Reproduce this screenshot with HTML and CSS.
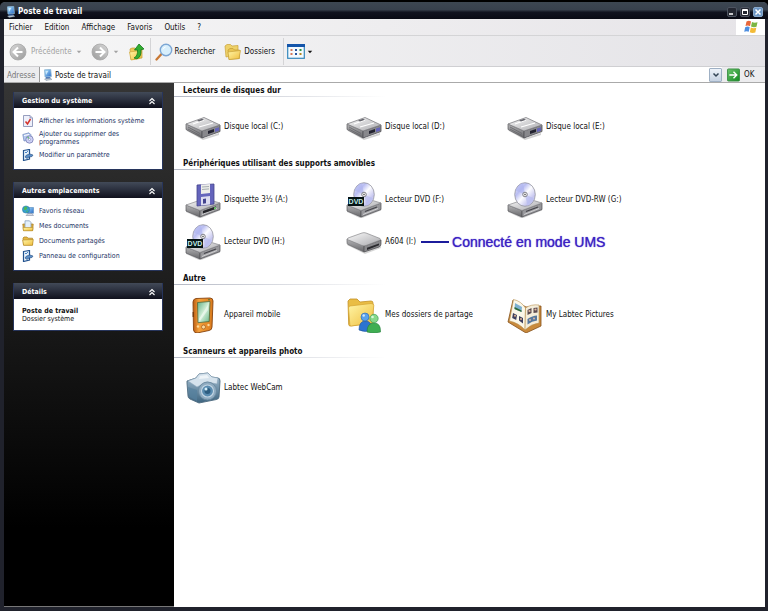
FILE: index.html
```html
<!DOCTYPE html>
<html lang="fr">
<head>
<meta charset="utf-8">
<title>Poste de travail</title>
<link rel="stylesheet" href="styles.css">
</head>
<body>
<svg class="defs" aria-hidden="true">
  <defs>
    <linearGradient id="metal" x1="0" y1="0" x2="1" y2="1"><stop offset="0" stop-color="#fafafa"/><stop offset="1" stop-color="#a9a9ad"/></linearGradient>
    <linearGradient id="side" x1="0" y1="0" x2="0" y2="1"><stop offset="0" stop-color="#b4b4b6"/><stop offset="1" stop-color="#66666a"/></linearGradient>
    <linearGradient id="disc" x1="0" y1="0" x2="1" y2="1"><stop offset="0" stop-color="#f4f4fc"/><stop offset=".3" stop-color="#b9bdf2"/><stop offset=".5" stop-color="#fdfdff"/><stop offset=".75" stop-color="#c6c6f0"/><stop offset="1" stop-color="#eeeef8"/></linearGradient>
    <linearGradient id="gold" x1="0" y1="0" x2="1" y2="1"><stop offset="0" stop-color="#fff6a8"/><stop offset="1" stop-color="#efbd3c"/></linearGradient>
    <linearGradient id="blue" x1="0" y1="0" x2="1" y2="1"><stop offset="0" stop-color="#a8e0fa"/><stop offset="1" stop-color="#2668c8"/></linearGradient>
    <linearGradient id="steel" x1="0" y1="0" x2="0" y2="1"><stop offset="0" stop-color="#a9c3d6"/><stop offset="1" stop-color="#3d647f"/></linearGradient>
    <linearGradient id="orange" x1="0" y1="0" x2="1" y2="0"><stop offset="0" stop-color="#b85a10"/><stop offset=".3" stop-color="#f6a23c"/><stop offset="1" stop-color="#d97a1c"/></linearGradient>
    <linearGradient id="screen" x1="0" y1="0" x2="1" y2="1"><stop offset="0" stop-color="#5fae86"/><stop offset=".5" stop-color="#d5f0d8"/><stop offset="1" stop-color="#67b48a"/></linearGradient>
    <linearGradient id="green" x1="0" y1="0" x2="1" y2="1"><stop offset="0" stop-color="#6cc46c"/><stop offset="1" stop-color="#128a20"/></linearGradient>
    <linearGradient id="grey" x1="0" y1="0" x2="1" y2="1"><stop offset="0" stop-color="#d8d8d8"/><stop offset="1" stop-color="#9a9a9a"/></linearGradient>

    <symbol id="base" viewBox="0 0 36 36">
      <path d="M1 25v5l14 6.500 20-8v-6z" fill="#77777b" opacity=".35"/>
      <path d="M1 23l14 5.500V35L1 29z" fill="url(#side)" stroke="#5c5c60" stroke-width=".7"/>
      <path d="M15 28.500L35 21v6.500L15 35z" fill="#97979b" stroke="#4e4e52" stroke-width=".7"/>
      <path d="M1 23l19-6.500L35 21l-20 7.500z" fill="url(#metal)" stroke="#88888c" stroke-width=".7"/>
      <path d="M19 29.500l12-4.500" stroke="#44444a" stroke-width="1.300"/><path d="M17 32.500l15-6" stroke="#dedee0" stroke-width=".8"/>
    </symbol>
    <symbol id="cd" viewBox="0 0 36 36">
      <ellipse cx="18" cy="12.500" rx="10.300" ry="11.800" fill="url(#disc)" stroke="#94949e" stroke-width=".8"/>
      <path d="M18 12.500L8.500 8.500Q11 2 16 1z" fill="#aeb4ee" opacity=".65"/>
      <path d="M18 12.500l9.500 4q-3 6-7 7.500z" fill="#b6baf0" opacity=".65"/>
      <circle cx="18" cy="12.500" r="2.300" fill="#eee" stroke="#77777f" stroke-width=".9"/><circle cx="18" cy="12.500" r=".8" fill="#555"/>
    </symbol>
    <symbol id="hdd" viewBox="0 0 36 36">
      <path d="M2 20l17 9 15-5v2L18 31 2 22z" fill="#666" opacity=".3"/>
      <path d="M1 15l16 7v7L1 20.500z" fill="url(#side)" stroke="#5c5c60" stroke-width=".7"/>
      <path d="M3 18l12 6.500M3 20l12 6.500" stroke="#66666a" stroke-width=".8"/>
      <path d="M17 22l18-6v6.500L17 29z" fill="#88888c" stroke="#4e4e54" stroke-width=".8"/>
      <path d="M23 22l6-2v3l-6 2z" fill="#222230"/><path d="M30 19.500l4-1.300v3.500l-4 1.300z" fill="#6464b8"/>
      <path d="M1 15l18-6.500L35 16l-18 6z" fill="url(#metal)" stroke="#808084" stroke-width=".8"/>
      <path d="M8 15l11-4M14 18l14-4" stroke="#fff" stroke-width="1.200"/><path d="M12 11.500l5-1.800 2 1-5 1.800z" fill="#66666e"/>
    </symbol>
    <symbol id="removable" viewBox="0 0 36 36">
      <path d="M1 17v4l18 9 16-6v-4z" fill="#888" opacity=".35"/>
      <path d="M1 15l17 7v6L2 20.500Q1 20 1 18z" fill="url(#side)" stroke="#6b6b6e" stroke-width=".7"/>
      <path d="M18 22l17-6v4q0 2-2 3l-15 5z" fill="#88888b" stroke="#4b4b4e" stroke-width=".7"/>
      <path d="M21 23.800L33 19.500v1.800L21 26z" fill="#2a2a2e"/>
      <path d="M2 14l14-5q2-.7 4 0l14 5.500q1.500 1-.5 1.800L20 21.500q-2 .7-4 0L2.500 16q-2-1-.5-2z" fill="url(#metal)" stroke="#88888b" stroke-width=".7"/>
    </symbol>
    <symbol id="floppy" viewBox="0 0 36 36">
      <use href="#base"/>
      <path d="M12 3l17-1v20l-17 2z" fill="#6464bc" stroke="#44448c" stroke-width=".8"/>
      <path d="M16 2.500l9-.5v9l-9 1z" fill="#ececea"/><path d="M17 5l7-.5M17 7.500l7-.6" stroke="#a6aeb0" stroke-width="1"/>
      <path d="M16 15l9-1v8.500l-9 1z" fill="#dcdcf0"/><path d="M18 17l3-.4v4.700l-3 .4z" fill="#44448e"/>
      <path d="M18 29l13-4.500V27L18 31.500z" fill="#25252a"/><path d="M29 25.500l2-.7v2l-2 .7z" fill="#6aca6a"/>
    </symbol>
    <symbol id="dvdrw" viewBox="0 0 36 36"><use href="#base"/><use href="#cd"/></symbol>
    <symbol id="dvd" viewBox="0 0 36 36">
      <use href="#base"/><use href="#cd"/>
      <rect x="2" y="15" width="16" height="9" fill="#061415"/>
      <text class="dvd-label" x="10" y="22" text-anchor="middle" fill="#c2ecea">DVD</text>
    </symbol>
    <symbol id="pda" viewBox="0 0 36 36">
      <path d="M8 5Q8 2 11 1.500L25 1q3 0 3 3l-1 26q0 3-3 3.500L12 36q-3 0-3.500-3z" fill="url(#orange)" stroke="#87430e" stroke-width=".9"/>
      <path d="M12.500 5.500L25 4.500l-.8 20-11.200 1.200z" fill="url(#screen)" stroke="#51683a" stroke-width=".8"/>
      <path d="M14 22l9-14v5l-8 11z" fill="#fff" opacity=".5"/>
      <circle cx="13" cy="29.500" r="1.200" fill="#fcd99a"/><circle cx="18.500" cy="30" r="2" fill="#fcd99a" stroke="#8f4a14" stroke-width=".6"/><circle cx="23.500" cy="28" r="1.200" fill="#fcd99a"/>
      <circle cx="24" cy="2.700" r=".8" fill="#3c7038"/><path d="M8.200 15v5" stroke="#6b3308" stroke-width="1.200"/>
    </symbol>
    <symbol id="share" viewBox="0 0 36 36">
      <path d="M2 4l2-2h7l3 3 11-1q2 0 2 2v20L4 29q-1 0-1.300-1.500z" fill="#e9bd45" stroke="#c39124" stroke-width=".8"/>
      <path d="M4 9l21-2.500q3 0 2.800 2L26 26 5.500 29q-1.500 0-1.700-1.500L2.500 11q0-1.700 1.500-2z" fill="url(#gold)" stroke="#d4a331" stroke-width=".7"/>
      <path d="M13 33q0-9 6.500-9t6 9q-6 3-12.500 0z" fill="#2c74d0" stroke="#1c4f9c" stroke-width=".6"/><circle cx="19" cy="20" r="4" fill="#5aa2ec" stroke="#2462b2" stroke-width=".6"/>
      <path d="M21 35q0-9 7-9t6.500 9q-7 2-13.500 0z" fill="#3fae52" stroke="#23803a" stroke-width=".6"/><circle cx="28" cy="21.500" r="4.200" fill="#86d88a" stroke="#319648" stroke-width=".6"/>
      <circle cx="26.500" cy="20" r="1.300" fill="#d8f8d8"/><circle cx="17.700" cy="18.500" r="1.200" fill="#cfe6fc"/>
    </symbol>
    <symbol id="album" viewBox="0 0 36 36">
      <path d="M1 25L6 3l13 7 15-1v20l-15 7z" fill="#c98a3c" stroke="#85501a" stroke-width=".8"/>
      <path d="M2.500 24L6.500 2.500Q14 4 18.500 11L18 33Q12 26 2.500 24z" fill="#fbf7e8" stroke="#b79150" stroke-width=".6"/>
      <path d="M18.500 11Q24 7 32 8v18q-8 1-14 7z" fill="#f4edda" stroke="#b79150" stroke-width=".6"/>
      <path d="M8 6l7 4-.5 5-7-3z" fill="#7cb0d0"/><path d="M7.600 10l7 3.500-.1 1.500-7-3z" fill="#2e6a38"/>
      <path d="M6 16l4 2-.8 5-4-2zM12 19l4 2v5.500l-4-3z" fill="#3f405e"/><circle cx="8" cy="18.700" r="1" fill="#deb494"/><circle cx="14" cy="22" r="1" fill="#deb494"/>
      <path d="M20.500 13l4-2v5l-4 2zM26.500 11l4-.5v5l-4 .5z" fill="#5b4b50"/><circle cx="22.500" cy="14" r="1.100" fill="#e0b8a0"/><circle cx="28.500" cy="12.500" r="1.100" fill="#e0b8a0"/>
      <path d="M20.500 22q5-3.500 9.500-3.500v5q-5 .5-9.500 4z" fill="#56789e"/><circle cx="23" cy="23" r="1" fill="#e0b8a0"/><circle cx="27" cy="21.500" r="1" fill="#e0b8a0"/>
    </symbol>
    <symbol id="camera" viewBox="0 0 36 36">
      <path d="M2 11l9-3 3-4 9-1 4 4 6 1q2 0 2 3l-1 16q0 2-3 2.600L14 33 5 29q-2-1-2-3L2 13z" fill="url(#steel)" stroke="#4e6b80" stroke-width=".9"/>
      <path d="M3 11l8-3 3-4 9-1 4 4 6 1-1 6-10-2-10 5z" fill="#d5e2ec" stroke="#8ba5b8" stroke-width=".6"/>
      <path d="M15 6l7-1 2 3-10 1z" fill="#eef4f8"/><path d="M3 17l9 3v11l-7-4z" fill="#56809e" opacity=".7"/>
      <circle cx="22.500" cy="21" r="9" fill="#8fabc0" stroke="#6a889e" stroke-width=".9"/>
      <circle cx="22.500" cy="21" r="6" fill="#5a8cb0" stroke="#c4d6e4" stroke-width="1.100"/><circle cx="22.500" cy="21" r="3" fill="#2d5d80"/><circle cx="21" cy="19" r="1.500" fill="#d5effa"/>
    </symbol>

    <symbol id="computer" viewBox="0 0 12 12">
      <path d="M2.500.8l6.200-.4.700 7.200-6.400.5z" fill="url(#blue)" stroke="#8db6d4" stroke-width=".8"/>
      <path d="M4 8.200h4l1 1.500H3.500z" fill="#2459a8"/><path d="M2.500 10l6-.8 1.500 1.300-6 1z" fill="#c4cfd8" stroke="#6b7f92" stroke-width=".4"/>
      <path d="M3.500 2l3-.3L4 6z" fill="#e0f5ff" opacity=".8"/>
    </symbol>
    <symbol id="sheet" viewBox="0 0 12 12"><path d="M1.500.5H8l2.500 2.500v8.500h-9z" fill="#eef0fa" stroke="#7f88ae" stroke-width=".8"/><path d="M8 .5V3h2.500" fill="#c3cae4" stroke="#7f88ae" stroke-width=".6"/><path d="M3.500 6.500l2 2.500 3-5" fill="none" stroke="#d4322a" stroke-width="1.500"/></symbol>
    <symbol id="programs" viewBox="0 0 12 12"><path d="M.8 2.500L7 .8l2 2v5L2 9z" fill="#b5c9ee" stroke="#6d86bc" stroke-width=".7"/><path d="M2 3.500l5-1" stroke="#fff"/><circle cx="7.500" cy="7.500" r="3.700" fill="#ccd0f4" stroke="#7a7fb4" stroke-width=".8"/><path d="M7.500 7.500L4.800 5.500l2-1.300z" fill="#70b884"/><circle cx="7.500" cy="7.500" r="1" fill="#fff" stroke="#777fb0" stroke-width=".5"/></symbol>
    <symbol id="panel" viewBox="0 0 12 12"><path d="M1.500 1.500l6-1v9.500l-6 1.500z" fill="#e8f3fc" stroke="#22528e" stroke-width="1.200"/><path d="M3 8l1.500-2L8 5l3 1-1 1.500-3 .5-2 1.500z" fill="#5d90c8" stroke="#244c80" stroke-width=".6"/><path d="M3 3l1 1 2-2" fill="none" stroke="#4b85c8"/></symbol>
    <symbol id="network" viewBox="0 0 12 12"><path d="M5 2.500h6.500v5.700H5z" fill="url(#blue)" stroke="#6294c4" stroke-width=".7"/><circle cx="4" cy="4.500" r="3.600" fill="#36a0cc" stroke="#23709c" stroke-width=".5"/><path d="M2 2.500l2-1.300L5.500 3 4 5 2 5zM4 6l2-.5-1 2z" fill="#4bb858"/><path d="M4 10.500l2-2h4l1.500 2z" fill="#d6dae4" stroke="#737e96" stroke-width=".5"/></symbol>
    <symbol id="docs" viewBox="0 0 12 12"><path d="M.8 4h10.400l-.5 6.500H1.500z" fill="#dfaf40" stroke="#a97e20" stroke-width=".7"/><path d="M3 .8h4.500L9 2.500v6H3z" fill="#e4f0fa" stroke="#7c98b4" stroke-width=".7"/><path d="M1 7.500h10l-.5 3.300h-9z" fill="url(#gold)" stroke="#b78c28" stroke-width=".6"/></symbol>
    <symbol id="folder" viewBox="0 0 12 12"><path d="M1 3l1-1h3l1 1.200h4.500V10H1.500z" fill="#e6b842" stroke="#a97e20" stroke-width=".7"/><path d="M.7 5L11.300 4.500l-.8 5.800H1.600z" fill="url(#gold)" stroke="#b78c28" stroke-width=".7"/></symbol>

    <symbol id="back" viewBox="0 0 18 18"><circle cx="9" cy="9" r="8" fill="url(#grey)" stroke="#a6a6a6" stroke-width=".8"/><path d="M9 4.500L4.500 9 9 13.500M5 9h8.500" fill="none" stroke="#fff" stroke-width="2"/></symbol>
    <symbol id="up" viewBox="0 0 18 18"><path d="M2 6l2-1h3l1 1h6v9l-11 1.500z" fill="#edc95a" stroke="#c49b30" stroke-width=".7"/><path d="M1.500 9l11-1.500-1 8L3 17z" fill="url(#gold)" stroke="#cfa63a" stroke-width=".7"/><path d="M6 15q4-2 3.500-8H6.500L11 1l5 5-3 .8q.5 7-4 9z" fill="#32ae32" stroke="#177a1c" stroke-width=".8"/></symbol>
    <symbol id="search" viewBox="0 0 18 18"><path d="M1.500 16.500l5-5.500" stroke="#c97834" stroke-width="2.300" stroke-linecap="round"/><circle cx="11" cy="7" r="5.700" fill="#d8effc" stroke="#7ca6d4" stroke-width="1.400"/><path d="M7.500 7Q8 3.500 11.500 3.500q-3 2-4 3.500z" fill="#fff"/></symbol>
    <symbol id="folders" viewBox="0 0 18 18"><path d="M1 3l2-1.500h3.500L8 3l6-.5v9L2 14z" fill="#eed169" stroke="#c8a239" stroke-width=".7"/><path d="M4 7l2-1.500h3L10.500 7h5v8.500L5 16.500z" fill="#e9c452" stroke="#c39c32" stroke-width=".7"/><path d="M4 9l12.500-1.500-1.500 8-10 1z" fill="url(#gold)" stroke="#c8a239" stroke-width=".7"/></symbol>
    <symbol id="views" viewBox="0 0 18 15"><rect x=".7" y=".7" width="16.600" height="13.600" fill="#f4fafe" stroke="#3387bc" stroke-width="1.200"/><path d="M0 0h18v3H0z" fill="#1455aa"/><path d="M3.500 5h2v2h-2zM3.500 9h2v2h-2z" fill="#d4785a"/><path d="M8 5h2v2H8zM8 9h2v2H8z" fill="#27539c"/><path d="M12.500 5h2v2h-2z" fill="#299440"/><path d="M12.500 9h2v2h-2z" fill="#b28622"/></symbol>
    <symbol id="flag" viewBox="0 0 16 14"><path d="M3.500 1.500q2.500-1.300 4.500 0L7 6.200Q5 5 2.500 6z" fill="#e8673a"/><path d="M9 2q2.500 1.200 5.500.2l-1 4.600q-2.800 1-5.500-.3z" fill="#7bb644"/><path d="M2.200 7.200q2.500-1.200 4.500 0l-1 4.600q-2-1.200-4.500 0z" fill="#4d8ee0"/><path d="M7.800 7.600q2.700 1.200 5.500.2l-1 4.700q-3 1-5.500-.3z" fill="#f3bb37"/></symbol>
    <symbol id="go" viewBox="0 0 14 14"><rect x=".5" y=".5" width="13" height="13" rx="1" fill="url(#green)" stroke="#3b8f46"/><path d="M2.500 7h8M7 3.500L10.500 7 7 10.500" fill="none" stroke="#fff" stroke-width="1.500"/></symbol>
    <symbol id="chevrons" viewBox="0 0 8 8"><path d="M1.500 4L4 1.500 6.500 4M1.500 7L4 4.500 6.500 7" fill="none" stroke="#fff" stroke-width="1.100"/></symbol>
    <symbol id="arrow" viewBox="0 0 6 6"><path d="M.8 1.800h4.400L3 4.200z" fill="currentColor"/></symbol>
  </defs>
</svg>

<div class="window">
  <header class="titlebar">
    <svg class="i12"><use href="#computer"/></svg>
    <h1>Poste de travail</h1>
    <div class="controls">
      <button aria-label="Réduire"><svg viewBox="0 0 8 8"><path d="M1 6h4" stroke="#fff" stroke-width="1.500"/></svg></button>
      <button aria-label="Agrandir"><svg viewBox="0 0 8 8"><path d="M1.500 1.500h5v5h-5zM1.500 2.500h5" fill="none" stroke="#fff"/></svg></button>
      <button class="close" aria-label="Fermer"><svg viewBox="0 0 8 8"><path d="M1.500 1.500l5 5M6.500 1.500l-5 5" stroke="#fff" stroke-width="1.500"/></svg></button>
    </div>
  </header>
  <nav class="menubar">
    <button>Fichier</button><button>Edition</button><button>Affichage</button><button>Favoris</button><button>Outils</button><button>?</button>
    <div class="brand"><svg><use href="#flag"/></svg></div>
  </nav>
  <div class="toolbar">
    <div class="tools nav-tools">
      <button class="off" disabled><svg class="i18"><use href="#back"/></svg>Précédente<svg class="i6"><use href="#arrow"/></svg></button>
      <button class="off" disabled aria-label="Suivante"><svg class="i18 flip"><use href="#back"/></svg><svg class="i6"><use href="#arrow"/></svg></button>
      <button aria-label="Dossier parent"><svg class="i18"><use href="#up"/></svg></button>
    </div>
    <div class="tools">
      <button><svg class="i18"><use href="#search"/></svg>Rechercher</button>
      <button><svg class="i18"><use href="#folders"/></svg>Dossiers</button>
    </div>
    <div class="tools">
      <button class="views" aria-label="Affichages"><svg class="view-icon"><use href="#views"/></svg><svg class="i6"><use href="#arrow"/></svg></button>
    </div>
  </div>
  <form class="address">
    <label for="path">Adresse</label>
    <div class="field">
      <svg class="i12"><use href="#computer"/></svg>
      <input id="path" type="text" value="Poste de travail">
      <button type="button" class="drop" aria-label="Dérouler"><svg viewBox="0 0 8 8"><path d="M1.500 2.500L4 5l2.500-2.500" fill="none" stroke="#345" stroke-width="1.500"/></svg></button>
    </div>
    <button type="button" class="go"><svg><use href="#go"/></svg>OK</button>
  </form>
  <div class="body">
    <aside class="sidebar">
      <section class="panel">
        <h2>Gestion du système<svg><use href="#chevrons"/></svg></h2>
        <ul>
          <li><svg class="i12"><use href="#sheet"/></svg><a href="#">Afficher les informations système</a></li>
          <li class="double"><svg class="i12"><use href="#programs"/></svg><a href="#">Ajouter ou supprimer des<br>programmes</a></li>
          <li><svg class="i12"><use href="#panel"/></svg><a href="#">Modifier un paramètre</a></li>
        </ul>
      </section>
      <section class="panel">
        <h2>Autres emplacements<svg><use href="#chevrons"/></svg></h2>
        <ul>
          <li><svg class="i12"><use href="#network"/></svg><a href="#">Favoris réseau</a></li>
          <li><svg class="i12"><use href="#docs"/></svg><a href="#">Mes documents</a></li>
          <li><svg class="i12"><use href="#folder"/></svg><a href="#">Documents partagés</a></li>
          <li><svg class="i12"><use href="#panel"/></svg><a href="#">Panneau de configuration</a></li>
        </ul>
      </section>
      <section class="panel">
        <h2>Détails<svg><use href="#chevrons"/></svg></h2>
        <div class="details"><strong>Poste de travail</strong><span>Dossier système</span></div>
      </section>
    </aside>
    <main class="content">
      <section>
        <h2>Lecteurs de disques dur</h2>
        <div class="grid">
          <div class="item"><svg><use href="#hdd"/></svg>Disque local (C:)</div>
          <div class="item"><svg><use href="#hdd"/></svg>Disque local (D:)</div>
          <div class="item"><svg><use href="#hdd"/></svg>Disque local (E:)</div>
        </div>
      </section>
      <section>
        <h2>Périphériques utilisant des supports amovibles</h2>
        <div class="grid">
          <div class="item"><svg><use href="#floppy"/></svg>Disquette 3½ (A:)</div>
          <div class="item"><svg><use href="#dvd"/></svg>Lecteur DVD (F:)</div>
          <div class="item"><svg><use href="#dvdrw"/></svg>Lecteur DVD-RW (G:)</div>
          <div class="item"><svg><use href="#dvd"/></svg>Lecteur DVD (H:)</div>
          <div class="item"><svg><use href="#removable"/></svg>A604 (I:)<span class="note">Connecté en mode UMS</span></div>
        </div>
      </section>
      <section>
        <h2>Autre</h2>
        <div class="grid">
          <div class="item"><svg><use href="#pda"/></svg>Appareil mobile</div>
          <div class="item"><svg><use href="#share"/></svg>Mes dossiers de partage</div>
          <div class="item"><svg><use href="#album"/></svg>My Labtec Pictures</div>
        </div>
      </section>
      <section>
        <h2>Scanneurs et appareils photo</h2>
        <div class="grid">
          <div class="item"><svg><use href="#camera"/></svg>Labtec WebCam</div>
        </div>
      </section>
    </main>
  </div>
</div>
</body>
</html>
```
FILE: styles.css
```css
* { box-sizing: border-box; }
html, body { height: 100%; }
body {
  margin: 0;
  padding-top: 2px;
  background: #000;
  color: #111;
  font: 8px/10px "DejaVu Sans Condensed", "DejaVu Sans", sans-serif;
}
h1, h2, ul { margin: 0; padding: 0; font-size: inherit; list-style: none; }
button, input { margin: 0; padding: 0; border: 0; background: none; color: inherit; font: inherit; }
svg { flex: none; display: block; }
.defs { position: absolute; width: 0; height: 0; }
.i6 { width: 6px; height: 6px; }
.i12 { width: 12px; height: 12px; }
.i18 { width: 18px; height: 18px; }
.flip { transform: scaleX(-1); }

.window {
  display: flex;
  flex-direction: column;
  min-height: 100%;
  border: solid #20222c;
  border-width: 0 3px 4px 4px;
  border-radius: 5px 5px 0 0;
  background: #ececee;
}
.titlebar {
  display: flex;
  align-items: center;
  gap: 1px;
  height: 17px;
  margin: 0 -3px 0 -4px;
  padding: 2px 5px 0;
  border-radius: 5px 5px 0 0;
  background: linear-gradient(#3d4752, #38414d 45%, #11131f 60%, #090a14);
  color: #fff;
}
.controls { display: flex; gap: 3px; margin-left: auto; }
.controls button {
  display: grid;
  place-items: center;
  width: 10px;
  height: 10px;
  border: 1px solid #4d5360;
  border-radius: 2px;
  background: #242731;
}
.controls svg { width: 8px; height: 8px; }
.controls .close { background: #6d96c4; border-color: #89a9cc; }

.menubar {
  display: flex;
  align-items: center;
  gap: 12px;
  height: 17px;
  padding-left: 5px;
  border-bottom: 1px solid #d4d4d6;
  background: linear-gradient(90deg, #f6f6f6, #e6e4e8);
}
.menubar button { padding-top: 1px; }
.brand {
  display: grid;
  place-items: center;
  align-self: stretch;
  width: 29px;
  margin-left: auto;
  background: #fff;
}
.brand svg { width: 16px; height: 14px; }

.toolbar {
  display: flex;
  align-items: center;
  height: 31px;
  border-bottom: 1px solid #cfcfd2;
  background: linear-gradient(90deg, #f7f7f7, #e4e3e7);
}
.tools { display: flex; align-items: center; gap: 9px; height: 27px; padding: 1px 8px 0 4px; border-right: 1px solid #d4d4d6; }
.tools:last-child { border: 0; padding-left: 3px; }
.tools button { display: flex; align-items: center; gap: 2px; }
.nav-tools { padding: 1px 4px 0 5px; }
.nav-tools button { gap: 4px; }
.tools .off { color: #a2a2a2; }
.view-icon { width: 18px; height: 15px; }

.address {
  display: flex;
  align-items: stretch;
  height: 16px;
  border-bottom: 1px solid #aaa;
  background: #ececee;
}
.address label { width: 35px; padding: 4px 0 0 3px; color: #777; }
.field { display: flex; align-items: center; flex: 1; gap: 1px; padding-left: 2px; border-left: 1px solid #999; background: #fff; }
.field input { flex: 1; min-width: 0; padding-top: 2px; outline: 0; }
.drop { display: grid; place-items: center; width: 13px; height: 14px; border: 1px solid #9fb0c4; border-radius: 1px; background: linear-gradient(#eef3fa, #c6d2e2); }
.drop svg { width: 8px; height: 8px; }
.go { display: flex; align-items: center; gap: 4px; width: 43px; padding-left: 5px; }
.go svg { width: 13px; height: 14px; }

.body { display: flex; flex: 1; }
.sidebar {
  display: flex;
  flex-direction: column;
  gap: 12px;
  width: 170px;
  padding: 9px 11px 9px 9px;
  border-bottom: 1px solid #777;
  background: linear-gradient(#353535, #000 85%);
}
.panel { border: 1px solid #27355c; border-top: 0; background: #fff; }
.panel h2 {
  display: flex;
  align-items: center;
  justify-content: space-between;
  height: 16px;
  padding: 1px 6px 0 8px;
  background: linear-gradient(#424a58, #2c313f 45%, #10111d);
  color: #fff;
  font-size: 7px;
}
.panel h2 svg { width: 8px; height: 8px; }
.panel ul { padding: 5px 8px 7px; }
.panel li { display: flex; align-items: center; gap: 5px; height: 15px; color: #1b3264; font-size: 7px; line-height: 8px; white-space: nowrap; }
.panel .double { height: 19px; }
.panel a { color: inherit; text-decoration: none; }
.details { display: flex; flex-direction: column; height: 31px; padding: 8px 8px 0; font-size: 7px; line-height: 8px; }

.content { flex: 1; min-width: 0; background: #fff; }
.content h2 {
  height: 14px;
  padding: 3px 0 0 9px;
  background: linear-gradient(90deg, #b4b8c4, #fff) left bottom / 212px 1px no-repeat;
}
.grid {
  display: grid;
  grid-template-columns: repeat(3, 161px);
  grid-auto-rows: 41px;
  row-gap: 1px;
  padding: 9px 0 9px 11px;
}
.item { display: flex; align-items: center; gap: 3px; white-space: nowrap; }
.item > svg { width: 36px; height: 36px; }
.dvd-label { font: bold 7px "Liberation Sans", sans-serif; }
.note {
  display: flex;
  align-items: center;
  gap: 3px;
  padding-left: 2px;
  color: #3c22c4;
  font: 14px/16px "Liberation Sans", sans-serif;
  text-shadow: 0 0 1px #3c22c4;
}
.note::before { content: ""; width: 28px; height: 2px; background: #1c1c9c; }
```
